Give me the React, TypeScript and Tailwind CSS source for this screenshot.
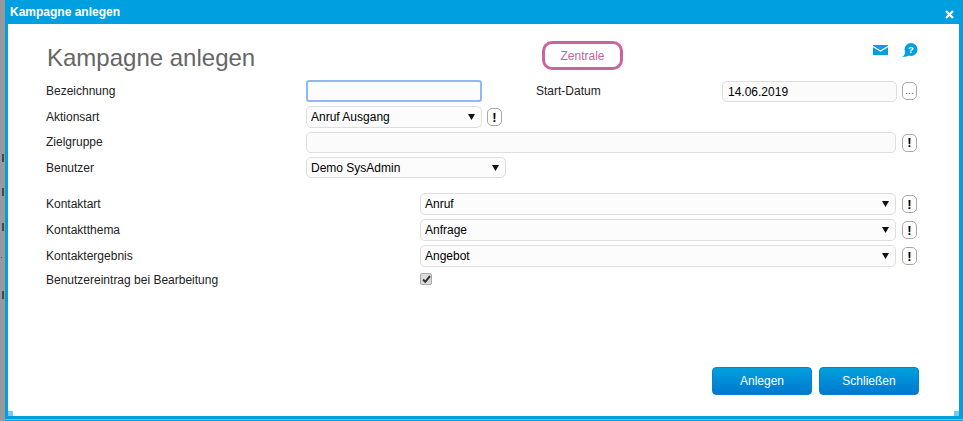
import React from 'react';

const font = { fontFamily: '"Liberation Sans", Arial, sans-serif' };

function Picker({ value, className }: { value: string; className: string }) {
    return (
        <div className={`relative ${className}`}>
            <select
                defaultValue={value}
                className="block w-full h-full appearance-none rounded-[5px] border border-[#dedede] bg-[#fcfcfc] pl-[4px] text-[12px] text-black outline-none"
            >
                <option>{value}</option>
            </select>
            <svg className="absolute right-[7px] top-[8px] w-[7px] h-[6px]" viewBox="0 0 7 6">
                <path d="M0 0H7L3.5 6Z" fill="#111" />
            </svg>
        </div>
    );
}

function Hint({ className = '' }: { className?: string }) {
    return (
        <button className={`w-[15px] h-[18px] shrink-0 rounded-[5px] border border-[#a8a8a8] bg-white text-[13px] font-bold leading-[15px] text-black ${className}`}>
            !
        </button>
    );
}

function Label({ children, className = 'w-[260px]' }: { children: string; className?: string }) {
    return <span className={`shrink-0 text-[12px] text-[#222] ${className}`}>{children}</span>;
}

export default function App() {
    return (
        <div className="relative flex w-[963px] h-[421px] overflow-hidden bg-white" style={font}>
            {/* page behind the dialog */}
            <div className="relative w-[5px] shrink-0 bg-[#999999]">
                <div className="absolute left-[2px] top-[154px] w-[2px] h-[8px] bg-[#4a4a4a]" />
                <div className="absolute left-[2px] top-[188px] w-[2px] h-[8px] bg-[#4a4a4a]" />
                <div className="absolute left-[2px] top-[223px] w-[2px] h-[8px] bg-[#4a4a4a]" />
                <div className="absolute left-[1px] top-[257px] w-[1px] h-[1px] bg-[#4a4a4a]" />
                <div className="absolute left-[2px] top-[291px] w-[2px] h-[8px] bg-[#4a4a4a]" />
            </div>

            <div className="flex flex-col flex-1 min-w-0 bg-[#009fe0]">
                <div className="flex items-center justify-between h-[24px] shrink-0 pl-[5px] pr-[9px]">
                    <span className="text-[12px] font-bold text-white">Kampagne anlegen</span>
                    <svg className="w-[9px] h-[9px] mt-[4px]" viewBox="0 0 9 9">
                        <path d="M1 1L8 8M8 1L1 8" stroke="#fff" strokeWidth="2.2" />
                    </svg>
                </div>

                <div className="relative flex flex-col h-[392px] ml-[3px] mr-[4px] bg-white pl-[38px] pr-[40px] pb-[21px]">
                    <div className="flex items-start h-[56px] pt-[17px] shrink-0">
                        <h1 className="w-[496px] pl-px text-[24px] leading-[34px] text-[#666666]">Kampagne anlegen</h1>
                        <div className="flex items-center justify-center w-[81px] h-[29px] rounded-[10px] border-[3px] border-[#c9659a] text-[12px] text-[#c9659a]">
                            Zentrale
                        </div>
                        <svg className="ml-[250px] mt-[4px] w-[15px] h-[10px]" viewBox="0 0 15 10">
                            <rect width="15" height="10" fill="#009fe0" />
                            <path d="M0 1.5L7.5 6L15 1.5" fill="none" stroke="#fff" strokeWidth="1.4" />
                        </svg>
                        <svg className="ml-[14px] mt-[2px] w-[16px] h-[14px]" viewBox="0 0 16 14">
                            <circle cx="9" cy="6.5" r="6.5" fill="#009fe0" />
                            <path d="M0 13.5C2 13 3 11.5 3.2 9L7 12.5C5 13.7 2.5 14 0 13.5Z" fill="#009fe0" />
                            <text x="9" y="10" textAnchor="middle" fontSize="9.5" fontWeight="700" fill="#fff">?</text>
                        </svg>
                    </div>

                    <div className="flex flex-col gap-[4px]">
                        <div className="flex items-center h-[22px]">
                            <Label>Bezeichnung</Label>
                            <input className="w-[176px] h-[22px] rounded-[3px] border-2 border-[#8fb8f5] bg-[#fcfcfc] outline-none" />
                            <Label className="w-[186px] ml-[54px]">Start-Datum</Label>
                            <input
                                defaultValue="14.06.2019"
                                className="w-[175px] h-[21px] mt-px rounded-[5px] border border-[#dedede] bg-[#fbfbfb] pl-[5px] text-[12px] text-black outline-none"
                            />
                            <button className="ml-[5px] w-[15px] h-[18px] rounded-[5px] border border-[#a8a8a8] bg-white text-[10px] leading-[14px] text-[#555]">...</button>
                        </div>
                        <div className="flex items-center h-[22px]">
                            <Label>Aktionsart</Label>
                            <Picker value="Anruf Ausgang" className="w-[176px] h-[22px]" />
                            <Hint className="ml-[5px]" />
                        </div>
                        <div className="flex items-center h-[21px]">
                            <Label className="w-[260px] pb-[2px]">Zielgruppe</Label>
                            <input className="w-[590px] h-[21px] rounded-[5px] border border-[#dedede] bg-[#fbfbfb] outline-none" />
                            <Hint className="ml-[6px]" />
                        </div>
                        <div className="flex items-center h-[21px]">
                            <Label>Benutzer</Label>
                            <Picker value="Demo SysAdmin" className="w-[200px] h-[21px]" />
                        </div>
                    </div>

                    <div className="flex flex-col gap-[4px] mt-[15px]">
                        {[
                            ['Kontaktart', 'Anruf'],
                            ['Kontaktthema', 'Anfrage'],
                            ['Kontaktergebnis', 'Angebot'],
                        ].map(([label, value]) => (
                            <div key={label} className="flex items-center h-[22px]">
                                <Label className="w-[374px]">{label}</Label>
                                <Picker value={value} className="w-[476px] h-[22px]" />
                                <Hint className="ml-[6px]" />
                            </div>
                        ))}
                        <div className="flex items-center h-[18px]">
                            <Label className="w-[374px]">Benutzereintrag bei Bearbeitung</Label>
                            <div className="flex items-center justify-center w-[12px] h-[12px] mb-[2px] rounded-[2px] border border-[#a9a9a9] bg-[#dcdcdc]">
                                <svg className="w-[9px] h-[8px]" viewBox="0 0 9 8">
                                    <path d="M1 4.5L3.3 6.8L8 1" fill="none" stroke="#333" strokeWidth="2" />
                                </svg>
                            </div>
                        </div>
                    </div>

                    <div className="flex justify-end gap-[7px] mt-auto">
                        <button className="w-[100px] h-[28px] rounded-[4px] border border-[#0a80c8] bg-gradient-to-b from-[#00a0dc] to-[#0078d0] text-[12px] text-white">Anlegen</button>
                        <button className="w-[100px] h-[28px] rounded-[4px] border border-[#0a80c8] bg-gradient-to-b from-[#00a0dc] to-[#0078d0] text-[12px] text-white">Schließen</button>
                    </div>

                    {/* resize handles */}
                    <div className="absolute left-0 bottom-0 w-[5px] h-[5px] bg-[#7cc8f0]" />
                    <div className="absolute right-0 bottom-0 w-[5px] h-[5px] bg-[#7cc8f0]" />
                </div>

                <div className="mt-[3px] h-px bg-[#6cc4ee]" />
            </div>
        </div>
    );
}
